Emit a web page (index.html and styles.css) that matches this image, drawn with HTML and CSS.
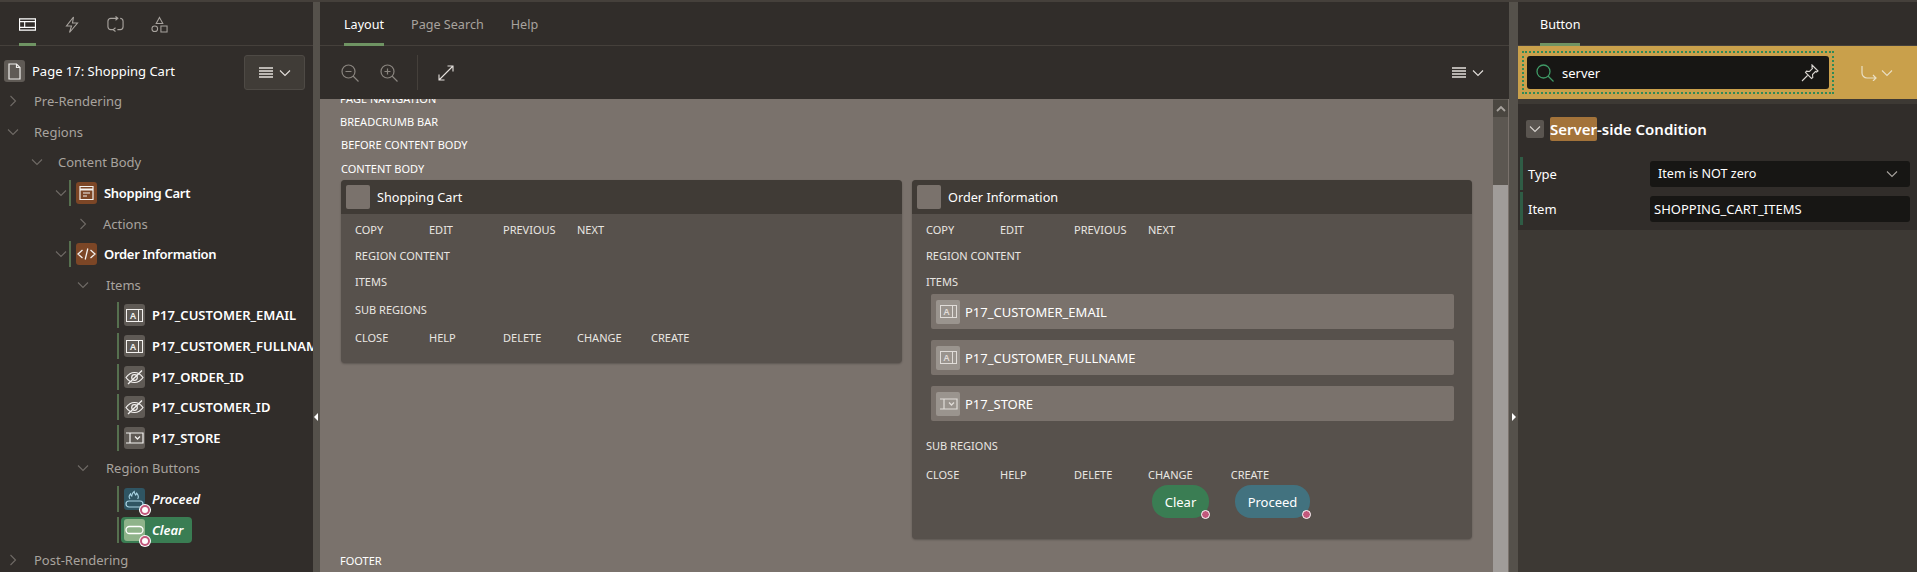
FILE: index.html
```html
<!DOCTYPE html>
<html>

<head>
  <meta name="viewport" content="width=device-width, initial-scale=1">
  <title>Page Designer</title>
  <link rel="stylesheet" href="styles.css">
</head>

<body>

  <svg class="defs" width="0" height="0">
    <symbol id="chev-down" viewBox="0 0 12 12"><path d="M1 3.500l5 5 5-5" fill="none" stroke="currentColor" stroke-width="1.100"/></symbol>
    <symbol id="chev-right" viewBox="0 0 12 12"><path d="M3.500 1l5 5-5 5" fill="none" stroke="currentColor" stroke-width="1.100"/></symbol>
    <symbol id="menu" viewBox="0 0 14 12"><path d="M0 1h14M0 4h14M0 7h14M0 10h14" fill="none" stroke="currentColor" stroke-width="1.400"/></symbol>
    <symbol id="i-hidden" viewBox="0 0 21 22">
      <path d="M2 11.500c2.500-3.500 5.500-5 8.500-5s6 1.500 8.500 5c-2.500 3.500-5.500 5-8.500 5s-6-1.500-8.500-5z" fill="none" stroke="currentColor" stroke-width="1.200"/>
      <circle cx="10.500" cy="11.500" r="2.800" fill="none" stroke="currentColor" stroke-width="1.200"/>
      <path d="M4 18L18 4.500" stroke="currentColor" stroke-width="1.300"/>
    </symbol>
    <symbol id="i-select" viewBox="0 0 21 22">
      <path d="M2 6h17v10H9M2 16h7M6 6v10" fill="none" stroke="currentColor" stroke-width="1.200"/>
      <path d="M11 9.500l2.500 2.500 2.500-2.500" fill="none" stroke="currentColor" stroke-width="1.300"/>
    </symbol>
    <symbol id="i-button" viewBox="0 0 21 22">
      <rect x="2" y="7.500" width="17" height="7" rx="3.500" fill="none" stroke="currentColor" stroke-width="1.300"/>
    </symbol>
    <symbol id="i-hot" viewBox="0 0 21 22">
      <rect x="2" y="13" width="17" height="6" rx="3" fill="none" stroke="currentColor" stroke-width="1.200"/>
      <path d="M6 11c-1.500-2-.5-4 .5-5 0 1 .5 1.500 1.200 2 .2-2 1-3.500 2.500-4.500 0 2 1 2.500 1.500 3.500.6-.6.800-1 1-1.800 1.500 1.800 2.300 3.800 1 5.800" fill="none" stroke="currentColor" stroke-width="1.100"/>
    </symbol>
    <symbol id="i-cards" viewBox="0 0 21 22">
      <path d="M4 4.500h13v13H4z" fill="none" stroke="currentColor" stroke-width="1.200"/>
      <path d="M4 7.500h13" stroke="currentColor" stroke-width="2"/>
      <path d="M7 11h7M7 14h4" stroke="currentColor" stroke-width="1.200"/>
    </symbol>
    <symbol id="i-code" viewBox="0 0 21 22">
      <path d="M6.500 7L2 11l4.500 4M14.500 7L19 11l-4.500 4M11.800 5.500L9.200 16.500" fill="none" stroke="currentColor" stroke-width="1.300"/>
    </symbol>
  </svg>

  <div class="app">

    <aside class="tree-panel">
      <nav class="tabs tree-tabs">
        <span class="tree-tab active">
          <svg width="18" height="13" viewBox="0 0 18 13" fill="none" stroke="currentColor" stroke-width="1.200"><path d="M.6.6h16.800v11.800H.6zM.6 3.500h16.800M.6 9.500h16.800M6 3.500v6"/></svg>
        </span>
        <span class="tree-tab">
          <svg width="14" height="17" viewBox="0 0 14 17" fill="none" stroke="currentColor" stroke-width="1.100"><path d="M8.500 1L1.500 10h5l-2 6.500 8-9.500H7.500z"/></svg>
        </span>
        <span class="tree-tab">
          <svg width="18" height="16" viewBox="0 0 18 16" fill="none" stroke="currentColor" stroke-width="1.200"><path d="M7 14H4a3 3 0 0 1-3-3V5a3 3 0 0 1 3-3h7M9 0l2.500 2L9 4M11 14h3a3 3 0 0 0 3-3V5a3 3 0 0 0-3-3M9 12l-2.500 2L9 16"/></svg>
        </span>
        <span class="tree-tab">
          <svg width="18" height="17" viewBox="0 0 18 17" fill="none" stroke="currentColor" stroke-width="1.100"><path d="M9 1l3.500 6.500h-7z"/><circle cx="4" cy="13" r="3"/><path d="M10.500 10h6.500v6.500h-6.500z"/></svg>
        </span>
      </nav>

      <div class="page-head">
        <span class="page-icon">
          <svg width="13" height="17" viewBox="0 0 13 17" fill="none" stroke="#f0eeec" stroke-width="1.200"><path d="M1 1h7.500L12 4.500V16H1z"/><path d="M8.500 1v3.500H12" /></svg>
        </span>
        <span class="page-title">Page 17: Shopping Cart</span>
        <span class="menu-btn">
          <svg class="ico-menu" width="14" height="12"><use href="#menu"/></svg>
          <svg class="ico-chev" width="12" height="12"><use href="#chev-down"/></svg>
        </span>
      </div>

      <div class="tree">
        <div class="row l0"><svg class="chev" width="12" height="12"><use href="#chev-right"/></svg><span class="group">Pre-Rendering</span></div>
        <div class="row l0"><svg class="chev" width="12" height="12"><use href="#chev-down"/></svg><span class="group">Regions</span></div>
        <div class="row l1"><svg class="chev" width="12" height="12"><use href="#chev-down"/></svg><span class="group">Content Body</span></div>
        <div class="row l2">
          <svg class="chev" width="12" height="12"><use href="#chev-down"/></svg>
          <span class="bar"></span>
          <span class="node-icon region"><svg width="21" height="22"><use href="#i-cards"/></svg></span>
          <span class="node">Shopping Cart</span>
        </div>
        <div class="row l3"><svg class="chev" width="12" height="12"><use href="#chev-right"/></svg><span class="group tight">Actions</span></div>
        <div class="row l2">
          <svg class="chev" width="12" height="12"><use href="#chev-down"/></svg>
          <span class="bar"></span>
          <span class="node-icon region"><svg width="21" height="22"><use href="#i-code"/></svg></span>
          <span class="node">Order Information</span>
        </div>
        <div class="row l3"><svg class="chev" width="12" height="12"><use href="#chev-down"/></svg><span class="group">Items</span></div>
        <div class="row l4">
          <span class="bar"></span>
          <span class="node-icon"><span class="text-ico">A</span></span>
          <span class="node">P17_CUSTOMER_EMAIL</span>
        </div>
        <div class="row l4">
          <span class="bar"></span>
          <span class="node-icon"><span class="text-ico">A</span></span>
          <span class="node">P17_CUSTOMER_FULLNAME</span>
        </div>
        <div class="row l4">
          <span class="bar"></span>
          <span class="node-icon"><svg width="21" height="22"><use href="#i-hidden"/></svg></span>
          <span class="node">P17_ORDER_ID</span>
        </div>
        <div class="row l4">
          <span class="bar"></span>
          <span class="node-icon"><svg width="21" height="22"><use href="#i-hidden"/></svg></span>
          <span class="node">P17_CUSTOMER_ID</span>
        </div>
        <div class="row l4">
          <span class="bar"></span>
          <span class="node-icon"><svg width="21" height="22"><use href="#i-select"/></svg></span>
          <span class="node">P17_STORE</span>
        </div>
        <div class="row l3"><svg class="chev" width="12" height="12"><use href="#chev-down"/></svg><span class="group">Region Buttons</span></div>
        <div class="row l4">
          <span class="bar"></span>
          <span class="node-icon hot"><svg width="21" height="22"><use href="#i-hot"/></svg><i class="cond-dot"></i></span>
          <span class="node btn-name">Proceed</span>
        </div>
        <div class="row l4">
          <span class="bar"></span>
          <span class="selected">
            <span class="node-icon picked"><svg width="21" height="22"><use href="#i-button"/></svg><i class="cond-dot"></i></span>
            <span class="node btn-name">Clear</span>
          </span>
        </div>
        <div class="row l0"><svg class="chev" width="12" height="12"><use href="#chev-right"/></svg><span class="group">Post-Rendering</span></div>
      </div>
    </aside>

    <div class="splitter"><i class="arrow left"></i></div>

    <main class="center">
      <nav class="tabs center-tabs">
        <span class="tab active">Layout</span>
        <span class="tab">Page Search</span>
        <span class="tab">Help</span>
      </nav>

      <div class="toolbar">
        <svg class="tool dim" width="18" height="18" viewBox="0 0 18 18" fill="none" stroke="currentColor" stroke-width="1.200"><circle cx="7.500" cy="7.500" r="6.500"/><path d="M12 12l5.500 5.500M4.500 7.500h6"/></svg>
        <svg class="tool dim" width="18" height="18" viewBox="0 0 18 18" fill="none" stroke="currentColor" stroke-width="1.200"><circle cx="7.500" cy="7.500" r="6.500"/><path d="M12 12l5.500 5.500M4.500 7.500h6M7.500 4.500v6"/></svg>
        <span class="tool-sep"></span>
        <svg class="tool" width="16" height="16" viewBox="0 0 16 16" fill="none" stroke="currentColor" stroke-width="1.100"><path d="M1 15L15 1M9.500 1H15v5.500M1 9.500V15h5.500"/></svg>
        <span class="tool-menu">
          <svg class="ico-menu" width="14" height="12"><use href="#menu"/></svg>
          <svg class="ico-chev" width="12" height="12"><use href="#chev-down"/></svg>
        </span>
      </div>

      <div class="canvas">
        <div class="canvas-body">
          <div class="slot nav-slot">PAGE NAVIGATION</div>
          <div class="slot">BREADCRUMB BAR</div>
          <div class="slot shift">BEFORE CONTENT BODY</div>
          <div class="slot shift">CONTENT BODY</div>

          <div class="cards">
            <section class="card short">
              <header class="card-head"><span class="card-box"></span>Shopping Cart</header>
              <div class="pos-row"><span>COPY</span><span>EDIT</span><span>PREVIOUS</span><span>NEXT</span></div>
              <div class="pos">REGION CONTENT</div>
              <div class="pos">ITEMS</div>
              <div class="pos">SUB REGIONS</div>
              <div class="pos-row"><span>CLOSE</span><span>HELP</span><span>DELETE</span><span>CHANGE</span><span>CREATE</span></div>
            </section>

            <section class="card">
              <header class="card-head"><span class="card-box"></span>Order Information</header>
              <div class="pos-row"><span>COPY</span><span>EDIT</span><span>PREVIOUS</span><span>NEXT</span></div>
              <div class="pos">REGION CONTENT</div>
              <div class="pos">ITEMS</div>
              <div class="item-list">
                <div class="item"><span class="item-box"><span class="text-ico">A</span></span>P17_CUSTOMER_EMAIL</div>
                <div class="item"><span class="item-box"><span class="text-ico">A</span></span>P17_CUSTOMER_FULLNAME</div>
                <div class="item"><span class="item-box"><svg width="21" height="22"><use href="#i-select"/></svg></span>P17_STORE</div>
              </div>
              <div class="pos sub">SUB REGIONS</div>
              <div class="pos-row"><span>CLOSE</span><span>HELP</span><span>DELETE</span><span class="col-wide">CHANGE</span><span>CREATE</span></div>
              <div class="btn-row">
                <span class="pill clear">Clear<i class="pill-dot"></i></span>
                <span class="pill proceed">Proceed<i class="pill-dot"></i></span>
              </div>
            </section>
          </div>

          <div class="slot footer-slot">FOOTER</div>
        </div>

        <div class="scrollbar">
          <span class="scroll-up"><svg width="10" height="8" viewBox="0 0 10 8" fill="none" stroke="#a8a39e" stroke-width="1.800"><path d="M1 6l4-4 4 4"/></svg></span>
          <span class="scroll-track"></span>
          <span class="scroll-thumb"></span>
        </div>
      </div>
    </main>

    <div class="splitter wide"><i class="arrow right"></i></div>

    <aside class="props">
      <nav class="tabs props-tabs">
        <span class="tab active">Button</span>
      </nav>

      <div class="filter-bar">
        <div class="filter-focus">
          <div class="filter-input">
            <svg class="search-ico" width="18" height="18" viewBox="0 0 18 18" fill="none" stroke="#3f9a66" stroke-width="1.300"><circle cx="7.500" cy="7.500" r="6.500"/><path d="M12 12l5.500 5.500"/></svg>
            <span class="filter-text">server</span>
            <svg class="pin-ico" width="18" height="18" viewBox="0 0 18 18" fill="none" stroke="#d9d5d0" stroke-width="1.100"><path d="M11 1l6 6-1.500 1-1-.5-3 3 .3 3-1.300 1-6-6 1-1.300 3 .3 3-3-.5-1zM6.500 11.500L1 17"/></svg>
          </div>
        </div>
        <span class="goto">
          <svg width="16" height="16" viewBox="0 0 16 16" fill="none" stroke="#eadfc4" stroke-width="1.200"><path d="M1 1v7a5 5 0 0 0 5 5h9M12 10l3 3-3 3"/></svg>
          <svg class="goto-chev" width="12" height="12"><use href="#chev-down"/></svg>
        </span>
      </div>

      <div class="prop-band"></div>

      <section class="prop-group">
        <h3 class="group-title">
          <span class="collapse"><svg width="12" height="12"><use href="#chev-down"/></svg></span>
          <span><mark class="hit">Server</mark>-side Condition</span>
        </h3>
        <div class="field">
          <label class="field-label">Type</label>
          <span class="field-value select">Item is NOT zero<svg width="12" height="12"><use href="#chev-down"/></svg></span>
        </div>
        <div class="field">
          <label class="field-label">Item</label>
          <span class="field-value">SHOPPING_CART_ITEMS</span>
        </div>
      </section>
    </aside>

  </div>

</body>

</html>
```

FILE: styles.css
```css
* {
  box-sizing: border-box;
}

html,
body {
  margin: 0;
  height: 100%;
  overflow: hidden;
}

body {
  background: #312d2a;
  color: #fff;
  font-family: "Noto Sans", "Open Sans", sans-serif;
  font-size: 13px;
}

.defs {
  position: absolute;
}

.app {
  display: flex;
  height: 572px;
  border-top: 2px solid #45403b;
}

/* shared tab strip */
.tabs {
  display: flex;
  height: 44px;
  border-bottom: 1px solid #45403b;
}

.tab {
  display: flex;
  align-items: center;
  height: 44px;
  padding-top: 3px;
  font-size: 12.6px;
  color: #a8a39e;
  border-bottom: 3px solid transparent;
}

.tab.active {
  color: #fff;
  border-bottom-color: #6f9463;
}

/* left tree */
.tree-panel {
  flex: none;
  width: 313px;
  overflow: hidden;
}

.tree-tabs {
  padding-left: 19px;
  gap: 27px;
}

.tree-tab {
  display: flex;
  align-items: center;
  justify-content: center;
  width: 17px;
  height: 44px;
  padding-top: 3px;
  color: #a8a39e;
  border-bottom: 3px solid transparent;
}

.tree-tab.active {
  color: #fff;
  border-bottom-color: #6f9463;
}

.page-head {
  display: flex;
  align-items: center;
  height: 44px;
  margin-bottom: -4px;
  padding: 9px 8px 0 4px;
}

.page-icon {
  display: flex;
  align-items: center;
  justify-content: center;
  width: 21px;
  height: 22px;
  margin-top: -3px;
  border-radius: 3px;
  background: #5f5a55;
}

.page-title {
  flex: 1;
  margin: -3px 0 0 7px;
}

.menu-btn {
  display: flex;
  align-items: center;
  justify-content: center;
  gap: 6px;
  width: 61px;
  height: 35px;
  color: #e4e0dc;
  background: #403c37;
  border: 1px solid #4e4a45;
  border-radius: 3px;
}

.row {
  display: flex;
  align-items: center;
  height: 30.6px;
  white-space: nowrap;
}

.l0 {
  padding-left: 7px;
}

.l1 {
  padding-left: 31px;
}

.l2 {
  padding-left: 55px;
}

.l3 {
  padding-left: 77px;
}

.l4 {
  padding-left: 117px;
}

.chev {
  flex: none;
  color: #6f6a65;
}

.group {
  margin-left: 15px;
  color: #a8a39e;
}

.l3 .group {
  margin-left: 17px;
}

.l3 .group.tight {
  margin-left: 14px;
}

.bar {
  flex: none;
  width: 2px;
  height: 26px;
  background: #56704f;
}

.l2 .bar {
  margin-left: 2px;
}

.l2 .node {
  letter-spacing: -.3px;
}

.node-icon {
  position: relative;
  flex: none;
  display: flex;
  align-items: center;
  justify-content: center;
  width: 21px;
  height: 22px;
  margin-left: 5px;
  border-radius: 3px;
  color: #f4f2f0;
  background: #5f5a55;
}

.node-icon.region {
  background: #7c4626;
}

.node-icon.hot {
  color: #a9d4e4;
  background: #2f5563;
}

.node-icon.picked {
  margin-left: 0;
  color: #fff;
  background: #8fb38a;
}

.text-ico {
  position: relative;
  display: block;
  width: 17px;
  height: 13px;
  padding-left: 3px;
  border: 1px solid currentColor;
  font-size: 9px;
  font-weight: 600;
  line-height: 11px;
}

.text-ico::after {
  content: "";
  position: absolute;
  top: 0;
  bottom: 0;
  right: 3px;
  width: 1px;
  background: currentColor;
}

.node {
  margin-left: 7px;
  font-weight: 600;
}

.btn-name {
  font-style: italic;
}

.selected {
  display: flex;
  align-items: center;
  width: 71px;
  height: 26px;
  margin-left: 2px;
  padding-left: 3px;
  border-radius: 4px;
  background: #3a7d53;
}

.cond-dot {
  position: absolute;
  right: -5px;
  bottom: -5px;
  width: 10px;
  height: 10px;
  border: 2px solid #c2587c;
  border-radius: 50%;
  background: #fff;
  box-shadow: 0 0 0 1px #fff;
}

/* splitters */
.splitter {
  position: relative;
  flex: none;
  width: 7px;
  background: #55514b;
}

.splitter.wide {
  width: 9px;
}

.arrow {
  position: absolute;
  top: 411px;
  border-top: 4px solid transparent;
  border-bottom: 4px solid transparent;
}

.arrow.left {
  left: 1px;
  border-right: 4px solid #fff;
}

.arrow.right {
  left: 3px;
  border-left: 4px solid #fff;
}

/* middle column */
.center {
  flex: none;
  display: flex;
  flex-direction: column;
  width: 1189px;
}

.center-tabs {
  padding-left: 24px;
  gap: 27px;
}

.toolbar {
  flex: none;
  display: flex;
  align-items: center;
  height: 53px;
  padding: 0 25px 0 21px;
  color: #e4e0dc;
}

.tool.dim {
  margin-right: 21px;
  color: #8a857f;
}

.tool-sep {
  width: 1px;
  height: 35px;
  margin: 0 20px 0 -2px;
  background: #45403b;
}

.tool-menu {
  display: flex;
  align-items: center;
  gap: 6px;
  margin-left: auto;
}

.canvas {
  flex: 1;
  display: flex;
  min-height: 0;
  overflow: hidden;
  background: #7a726c;
}

.canvas-body {
  flex: 1;
  min-width: 0;
  padding: 0 21px 0 20px;
}

.slot {
  height: 23.5px;
  line-height: 23.5px;
  font-size: 11px;
  color: #fff;
}

.nav-slot {
  height: 22.5px;
  margin-top: -12px;
}

.shift {
  padding-left: 1px;
}

.cards {
  display: grid;
  grid-template-columns: 561px 560px;
  gap: 10px;
  height: 359px;
  margin: 0 0 10px 1px;
  align-items: start;
}

.card {
  height: 359px;
  border-radius: 4px;
  background: #57514c;
  box-shadow: 0 1px 2px rgba(0, 0, 0, .25);
  font-size: 11px;
  color: #e9e6e2;
  overflow: hidden;
}

.card.short {
  height: 183px;
}

.card-head {
  display: flex;
  align-items: center;
  height: 34px;
  padding-left: 5px;
  font-size: 12.7px;
  color: #fff;
  background: #403b36;
}

.card-box {
  width: 24px;
  height: 24px;
  margin-right: 7px;
  border-radius: 2px;
  background: #7a726c;
}

.pos-row {
  display: flex;
  height: 26px;
  padding-left: 14px;
  line-height: 26px;
  margin-top: 3px;
}

.pos-row span {
  width: 74px;
}

.pos-row .col-wide {
  width: 82.7px;
}

.pos {
  height: 26px;
  padding-left: 14px;
  line-height: 26px;
}

.card.short .pos:nth-of-type(4) {
  height: 28px;
  line-height: 30px;
}

.card .pos-row:last-of-type {
  margin-top: 2px;
}

.item-list {
  display: flex;
  flex-direction: column;
  gap: 11px;
  margin: -1px 18px 0 19px;
}

.item {
  display: flex;
  align-items: center;
  height: 35px;
  padding-left: 5px;
  border-radius: 2px;
  font-size: 13px;
  color: #fff;
  background: #7a726c;
}

.item-box {
  display: flex;
  align-items: center;
  justify-content: center;
  width: 24px;
  height: 24px;
  margin-right: 5px;
  border-radius: 2px;
  color: #e0dcd8;
  background: #9a948e;
}

.pos.sub {
  margin-top: 12px;
}

.btn-row {
  display: flex;
  gap: 26px;
  padding-left: 240px;
  margin-top: -3px;
}

.pill {
  position: relative;
  display: flex;
  align-items: center;
  justify-content: center;
  height: 33px;
  border-radius: 16px;
  font-size: 13px;
  color: #fff;
}

.pill.clear {
  width: 57px;
  background: #3a7d53;
}

.pill.proceed {
  width: 75px;
  background: #42727f;
}

.pill-dot {
  position: absolute;
  right: -1px;
  bottom: -1px;
  width: 9px;
  height: 9px;
  border: 1px solid #fff;
  border-radius: 50%;
  background: #c2587c;
}

.scrollbar {
  flex: none;
  display: flex;
  flex-direction: column;
  width: 15px;
  margin-right: 1px;
  background: #5c5751;
}

.scroll-up {
  flex: none;
  display: flex;
  align-items: center;
  justify-content: center;
  height: 17px;
  margin-top: 1px;
  background: #4a4640;
}

.scroll-track {
  flex: none;
  height: 68px;
}

.scroll-thumb {
  flex: 1;
  background: #a09c99;
}

/* right column */
.props {
  flex: 1;
  min-width: 0;
  background: #3d3934;
}

.props-tabs {
  padding-left: 22px;
  background: #312d2a;
}

.filter-bar {
  display: flex;
  align-items: center;
  height: 53px;
  padding-left: 4px;
  background: #c9a04b;
}

.filter-focus {
  width: 312px;
  height: 43px;
  padding: 3px;
  border: 2px dotted #2f8a58;
}

.filter-input {
  display: flex;
  align-items: center;
  height: 100%;
  padding: 0 10px 0 9px;
  border-radius: 3px;
  background: #171614;
}

.search-ico {
  flex: none;
}

.filter-text {
  flex: 1;
  margin-left: 8px;
}

.goto {
  display: flex;
  align-items: center;
  gap: 4px;
  margin-left: 27px;
  color: #eadfc4;
}

.prop-band {
  height: 5px;
}

.prop-group {
  height: 126px;
  padding: 13px 7px 0 2px;
  background: #312d2a;
}

.group-title {
  display: flex;
  align-items: center;
  gap: 6px;
  height: 24px;
  margin: 0 0 16px 6px;
  font-size: 15px;
  font-weight: 600;
}

.collapse {
  display: flex;
  align-items: center;
  justify-content: center;
  width: 18px;
  height: 18px;
  border-radius: 2px;
  color: #d9d5d0;
  background: #5a5550;
}

.hit {
  display: inline-block;
  height: 24px;
  line-height: 24px;
  border-radius: 2px;
  color: #fff;
  background: #a3733a;
}

.field {
  display: flex;
  align-items: center;
  height: 33px;
  margin-bottom: 2px;
  border-left: 3px solid #2f5c45;
}

.field-label {
  width: 127px;
  padding-left: 5px;
}

.field-value {
  flex: 1;
  display: flex;
  align-items: center;
  justify-content: space-between;
  height: 26px;
  padding: 0 4px;
  border-radius: 3px;
  background: #171614;
}

.field-value.select {
  padding: 0 12px 0 8px;
  font-size: 12.6px;
}

.field-value svg {
  color: #a8a39e;
}
```
